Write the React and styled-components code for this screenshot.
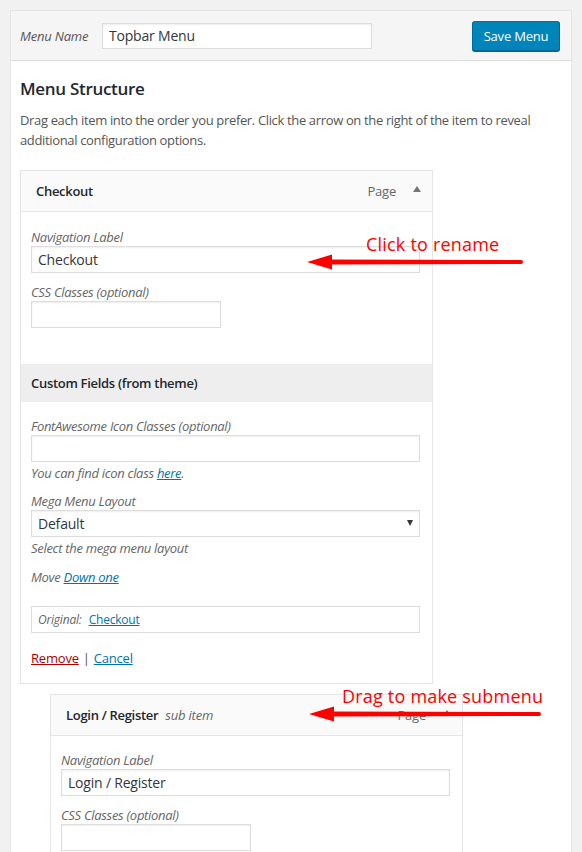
import React from "react";
import styled, { createGlobalStyle } from "styled-components";

const GlobalStyle = createGlobalStyle`
  html, body { margin: 0; padding: 0; }
  body {
    background: #f1f1f1;
    font-family: "Open Sans", "Noto Sans", sans-serif;
    font-size: 13px;
    color: #444;
  }
  * { box-sizing: border-box; }
`;

const Page = styled.div`
  position: relative;
  padding: 10px 10px 0 10px;
  height: 852px;
  overflow: hidden;
`;

const Panel = styled.div`
  background: #fff;
  border: 1px solid #e5e5e5;
  height: 900px;
`;

const Header = styled.div`
  display: flex;
  align-items: center;
  height: 50px;
  padding: 0 11px 0 9px;
  background: #f5f5f5;
  border-bottom: 1px solid #dddddd;
`;

const HeaderLabel = styled.span`
  font-style: italic;
  color: #555;
  width: 82px;
  letter-spacing: -0.2px;
`;

const TextInput = styled.div`
  display: flex;
  align-items: center;
  width: ${(p) => p.$w || "100%"};
  height: ${(p) => p.$h || 27}px;
  padding: 0 6px;
  background: #fff;
  border: 1px solid #ddd;
  box-shadow: inset 0 1px 2px rgba(0, 0, 0, 0.07);
  font-size: 14px;
  color: #32373c;
  letter-spacing: -0.2px;
`;

const Spacer = styled.div`
  flex: 1;
`;

const PrimaryButton = styled.button`
  width: 88px;
  height: 30px;
  background: #0085ba;
  border: 1px solid #0073aa;
  border-color: #0073aa #006799 #006799;
  box-shadow: 0 1px 0 #006799;
  border-radius: 3px;
  color: #fff;
  font-family: inherit;
  font-size: 13px;
  letter-spacing: -0.2px;
  padding: 0;
`;

const Body = styled.div`
  padding: 0 9px;
`;

const Title = styled.h3`
  margin: 18px 0 0 0;
  font-size: 17px;
  font-weight: 600;
  color: #23282d;
  line-height: 20px;
  letter-spacing: -0.3px;
`;

const Intro = styled.p`
  margin: 11px 0 20px 0;
  line-height: 20px;
  color: #555;
  letter-spacing: -0.35px;
`;

const Item = styled.div`
  width: 413px;
  margin-left: ${(p) => p.$indent || 0}px;
  margin-bottom: 10px;
  border: 1px solid #e5e5e5;
  background: #fff;
`;

const ItemBar = styled.div`
  display: flex;
  align-items: center;
  height: 41px;
  padding: 0 10px 0 15px;
  background: #fafafa;
  border-bottom: 1px solid #e5e5e5;
`;

const ItemTitle = styled.span`
  font-weight: 600;
  color: #23282d;
  letter-spacing: -0.3px;
`;

const SubTag = styled.span`
  font-style: italic;
  color: #666;
  margin-left: 7px;
  letter-spacing: -0.2px;
`;

const ItemType = styled.span`
  color: #666;
  letter-spacing: -0.2px;
`;

const Toggle = styled.span`
  width: 0;
  height: 0;
  margin-left: 17px;
  margin-right: 1px;
  border-left: 4px solid transparent;
  border-right: 4px solid transparent;
  border-bottom: 6px solid #72777c;
  transform: translateY(-2px);
`;

const Settings = styled.div`
  padding: ${(p) => p.$pad || "15px 12px 16px 10px"};
`;

const Field = styled.div`
  margin-bottom: 10px;
`;

const FieldLabel = styled.div`
  font-style: italic;
  color: #666;
  line-height: 18px;
  letter-spacing: -0.3px;
  margin-top: ${(p) => p.$top || 0}px;
`;

const Hint = styled.div`
  font-style: italic;
  color: #666;
  line-height: 18px;
  margin-top: 2px;
  letter-spacing: -0.3px;
`;

const Link = styled.a`
  color: ${(p) => p.$color || "#0073aa"};
  text-decoration: underline;
  font-style: ${(p) => (p.$italic ? "italic" : "normal")};
`;

const SectionBand = styled.div`
  display: flex;
  align-items: center;
  height: 38px;
  margin-top: 36px;
  padding-left: 10px;
  background: #eeeeee;
  font-weight: 600;
  color: #23282d;
  letter-spacing: -0.3px;
`;

const SelectBox = styled(TextInput)`
  justify-content: space-between;
  padding: 0 6px 0 6px;
`;

const Caret = styled.span`
  width: 0;
  height: 0;
  margin-top: -2px;
  border-left: 3px solid transparent;
  border-right: 3px solid transparent;
  border-top: 6px solid #32373c;
`;

const MoveLine = styled.div`
  font-style: italic;
  color: #666;
  line-height: 18px;
  margin: 11px 0 20px;
  letter-spacing: -0.3px;
`;

const OriginalBox = styled.div`
  display: flex;
  align-items: center;
  height: 27px;
  padding: 0 6px;
  border: 1px solid #ddd;
  font-size: 12px;
  letter-spacing: -0.2px;
`;

const OriginalLabel = styled.span`
  font-style: italic;
  color: #666;
  margin-right: 7px;
`;

const Actions = styled.div`
  margin-top: 16px;
  line-height: 18px;
  color: #555;
  letter-spacing: -0.2px;
`;

const Sep = styled.span`
  margin: 0 4px;
`;

const Annotation = styled.div`
  position: absolute;
  left: ${(p) => p.$x}px;
  top: ${(p) => p.$y}px;
  display: flex;
  flex-direction: column;
`;

const AnnoText = styled.span`
  color: #ff0000;
  font-size: 18px;
  line-height: 20px;
  letter-spacing: 0.2px;
  margin-left: ${(p) => p.$offset}px;
  white-space: nowrap;
`;

const Arrow = ({ length }) => (
  <svg width={length} height="16" viewBox={`0 0 ${length} 16`} style={{ display: "block" }}>
    <path d={`M0 8 L25 0.5 L25 5.5 L${length - 2} 6 L${length - 2} 10 L25 10.5 L25 15.5 Z`} fill="#ff0000" />
    <circle cx={length - 2} cy="8" r="2" fill="#ff0000" />
  </svg>
);

export default function App() {
  return (
    <>
      <GlobalStyle />
      <Page>
        <Panel>
          <Header>
            <HeaderLabel>Menu Name</HeaderLabel>
            <TextInput $w="270px" $h={26}>Topbar Menu</TextInput>
            <Spacer />
            <PrimaryButton>Save Menu</PrimaryButton>
          </Header>
          <Body>
            <Title>Menu Structure</Title>
            <Intro>
              Drag each item into the order you prefer. Click the arrow on the right of the item to reveal
              <br />
              additional configuration options.
            </Intro>

            <Item>
              <ItemBar>
                <ItemTitle>Checkout</ItemTitle>
                <Spacer />
                <ItemType>Page</ItemType>
                <Toggle />
              </ItemBar>
              <Settings $pad="16px 12px 0 10px">
                <Field>
                  <FieldLabel>Navigation Label</FieldLabel>
                  <TextInput>Checkout</TextInput>
                </Field>
                <Field>
                  <FieldLabel>CSS Classes (optional)</FieldLabel>
                  <TextInput $w="190px" />
                </Field>
              </Settings>
              <SectionBand>Custom Fields (from theme)</SectionBand>
              <Settings>
                <FieldLabel>FontAwesome Icon Classes (optional)</FieldLabel>
                <TextInput />
                <Hint>
                  You can find icon class <Link $italic>here</Link>.
                </Hint>
                <FieldLabel $top={10}>Mega Menu Layout</FieldLabel>
                <SelectBox>
                  Default
                  <Caret />
                </SelectBox>
                <Hint>Select the mega menu layout</Hint>
                <MoveLine>
                  Move <Link $italic>Down one</Link>
                </MoveLine>
                <OriginalBox>
                  <OriginalLabel>Original:</OriginalLabel>
                  <Link>Checkout</Link>
                </OriginalBox>
                <Actions>
                  <Link $color="#a00">Remove</Link>
                  <Sep>|</Sep>
                  <Link>Cancel</Link>
                </Actions>
              </Settings>
            </Item>

            <Item $indent={30}>
              <ItemBar>
                <ItemTitle>Login / Register</ItemTitle>
                <SubTag>sub item</SubTag>
                <Spacer />
                <ItemType>Page</ItemType>
                <Toggle />
              </ItemBar>
              <Settings $pad="15px 12px 0 10px">
                <Field>
                  <FieldLabel>Navigation Label</FieldLabel>
                  <TextInput>Login / Register</TextInput>
                </Field>
                <Field>
                  <FieldLabel>CSS Classes (optional)</FieldLabel>
                  <TextInput $w="190px" />
                </Field>
              </Settings>
            </Item>
          </Body>
        </Panel>

        <Annotation $x={307} $y={234}>
          <AnnoText $offset={59}>Click to rename</AnnoText>
          <Arrow length={216} />
        </Annotation>
        <Annotation $x={309} $y={686}>
          <AnnoText $offset={33}>Drag to make submenu</AnnoText>
          <Arrow length={232} />
        </Annotation>
      </Page>
    </>
  );
}
